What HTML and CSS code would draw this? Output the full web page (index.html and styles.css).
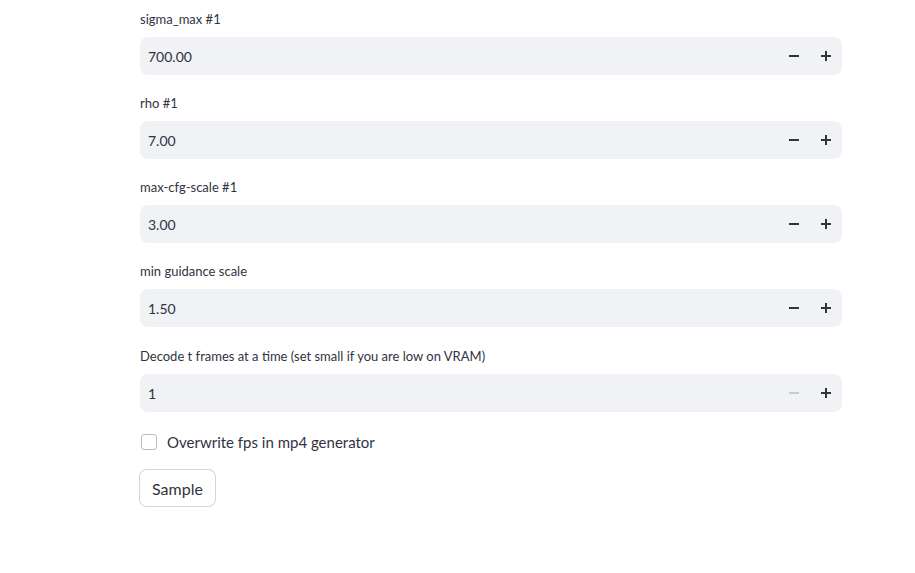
FILE: index.html
```html
<!DOCTYPE html>
<html>
<head>
<meta charset="utf-8">
<link rel="stylesheet" href="styles.css">
</head>
<body>
<main class="page">
  <div class="block">
    <div class="field">
      <label class="label">sigma_max #1</label>
      <div class="num">
        <span class="value">700.00</span>
        <button class="step"><svg width="10" height="10" viewBox="0 0 10 10"><rect x="0" y="4" width="10" height="2" fill="currentColor"/></svg></button>
        <button class="step"><svg width="10" height="10" viewBox="0 0 10 10"><rect x="0" y="4" width="10" height="2" fill="currentColor"/><rect x="4" y="0" width="2" height="10" fill="currentColor"/></svg></button>
      </div>
    </div>
    <div class="field">
      <label class="label">rho #1</label>
      <div class="num">
        <span class="value">7.00</span>
        <button class="step"><svg width="10" height="10" viewBox="0 0 10 10"><rect x="0" y="4" width="10" height="2" fill="currentColor"/></svg></button>
        <button class="step"><svg width="10" height="10" viewBox="0 0 10 10"><rect x="0" y="4" width="10" height="2" fill="currentColor"/><rect x="4" y="0" width="2" height="10" fill="currentColor"/></svg></button>
      </div>
    </div>
    <div class="field">
      <label class="label">max-cfg-scale #1</label>
      <div class="num">
        <span class="value">3.00</span>
        <button class="step"><svg width="10" height="10" viewBox="0 0 10 10"><rect x="0" y="4" width="10" height="2" fill="currentColor"/></svg></button>
        <button class="step"><svg width="10" height="10" viewBox="0 0 10 10"><rect x="0" y="4" width="10" height="2" fill="currentColor"/><rect x="4" y="0" width="2" height="10" fill="currentColor"/></svg></button>
      </div>
    </div>
    <div class="field">
      <label class="label">min guidance scale</label>
      <div class="num">
        <span class="value">1.50</span>
        <button class="step"><svg width="10" height="10" viewBox="0 0 10 10"><rect x="0" y="4" width="10" height="2" fill="currentColor"/></svg></button>
        <button class="step"><svg width="10" height="10" viewBox="0 0 10 10"><rect x="0" y="4" width="10" height="2" fill="currentColor"/><rect x="4" y="0" width="2" height="10" fill="currentColor"/></svg></button>
      </div>
    </div>
    <div class="field field-last">
      <label class="label">Decode t frames at a time (set small if you are low on VRAM)</label>
      <div class="num">
        <span class="value">1</span>
        <button class="step disabled"><svg width="10" height="10" viewBox="0 0 10 10"><rect x="0" y="4" width="10" height="2" fill="currentColor"/></svg></button>
        <button class="step"><svg width="10" height="10" viewBox="0 0 10 10"><rect x="0" y="4" width="10" height="2" fill="currentColor"/><rect x="4" y="0" width="2" height="10" fill="currentColor"/></svg></button>
      </div>
    </div>
    <label class="check">
      <span class="box"></span>
      <span class="check-text">Overwrite fps in mp4 generator</span>
    </label>
    <div>
      <button class="btn">Sample</button>
    </div>
  </div>
</main>
</body>
</html>
```

FILE: styles.css
```css
html, body {
  margin: 0;
  padding: 0;
  background: #ffffff;
}
body {
  font-family: Lato, "Open Sans", sans-serif;
  color: #31333f;
}
.page {
  padding: 7px 0 0 139px;
  width: 703px;
}
.block {
  display: flex;
  flex-direction: column;
  gap: 16px;
}
.field {
  display: flex;
  flex-direction: column;
}
.field-last {
  margin-top: 1px;
}
.label {
  font-size: 13px;
  height: 24px;
  line-height: 24px;
  margin-bottom: 6px;
  padding-left: 1px;
}
.num {
  display: flex;
  align-items: center;
  height: 38px;
  background: #f0f2f6;
  border-radius: 8px;
  margin-left: 1px;
}
.value {
  flex: 1;
  font-size: 14px;
  padding-left: 8px;
}
.step {
  width: 32px;
  height: 38px;
  border: none;
  background: transparent;
  color: #31333f;
  display: flex;
  align-items: center;
  justify-content: center;
  padding: 0;
}
.step.disabled {
  color: #c9ccd4;
}
.check {
  display: flex;
  align-items: center;
  height: 22px;
  padding-top: 3px;
  gap: 10px;
  padding-left: 2px;
}
.box {
  width: 14px;
  height: 14px;
  border: 1px solid #b9bbc3;
  border-radius: 3px;
  background: #fff;
}
.check-text {
  font-size: 15px;
}
.btn {
  font-family: inherit;
  font-size: 16px;
  color: #31333f;
  background: #fff;
  border: 1px solid rgba(49, 51, 63, 0.2);
  border-radius: 8px;
  height: 38px;
  padding: 0 12px;
}
```
